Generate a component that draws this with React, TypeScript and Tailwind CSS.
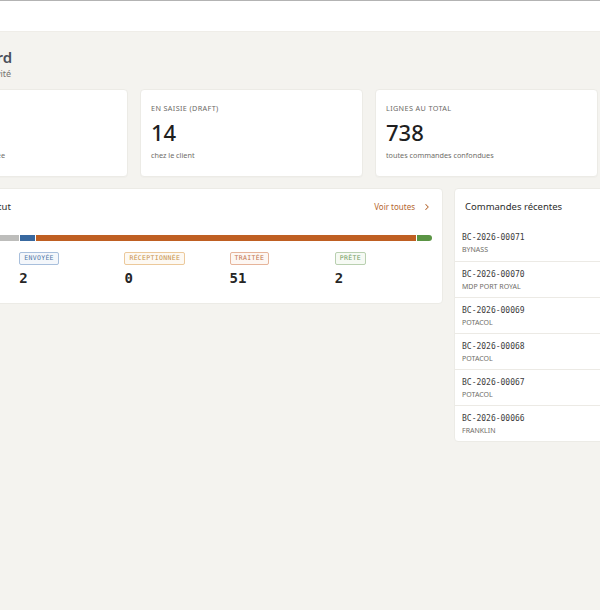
import React from 'react';
import { ChevronRight } from 'lucide-react';

const sans = { fontFamily: '"Noto Sans", Inter, sans-serif' };
const mono = { fontFamily: '"DejaVu Sans Mono", monospace' };

const stats = [
    { label: 'Commandes', value: '71', sub: 'depuis le début de l\u2019année' },
    { label: 'En saisie (draft)', value: '14', sub: 'chez le client' },
    { label: 'Lignes au total', value: '738', sub: 'toutes commandes confondues' },
    { label: 'Clients actifs', value: '9', sub: 'sur les 30 derniers jours' },
];

const statuses = [
    { key: 'draft', label: 'Brouillon', count: 14, bar: 'bg-[#bdbdbb]', badge: 'border-[#cfcfcc] text-[#807e78] bg-[#f7f7f5]' },
    { key: 'sent', label: 'Envoyée', count: 2, bar: 'bg-[#38689f]', badge: 'border-[#a8bfdc] text-[#5277a8] bg-[#f4f7fb]' },
    { key: 'received', label: 'Réceptionnée', count: 0, bar: 'bg-[#d9a256]', badge: 'border-[#ecc99b] text-[#c89148] bg-[#fdf9f3]' },
    { key: 'done', label: 'Traitée', count: 51, bar: 'bg-[#bf5f22]', badge: 'border-[#e6b49a] text-[#c27248] bg-[#fdf7f3]' },
    { key: 'ready', label: 'Prête', count: 2, bar: 'bg-[#5a9444]', badge: 'border-[#b9d0b0] text-[#739c62] bg-[#f6faf4]' },
];

const recent = [
    { code: 'BC-2026-00071', client: 'BYNASS' },
    { code: 'BC-2026-00070', client: 'MDP PORT ROYAL' },
    { code: 'BC-2026-00069', client: 'POTACOL' },
    { code: 'BC-2026-00068', client: 'POTACOL' },
    { code: 'BC-2026-00067', client: 'POTACOL' },
    { code: 'BC-2026-00066', client: 'FRANKLIN' },
];

const StatCard = ({ label, value, sub }) => (
    <div className="bg-white rounded-[4px] border border-[#ecebe6] shadow-[0_1px_1px_rgba(0,0,0,0.02)] h-[88px] pl-[10px] pt-[13px]">
        <p className="text-[7.25px] uppercase tracking-[0.05em] text-[#6b6a66] leading-[10px]">{label}</p>
        <p className="text-[22px] font-medium text-[#1f1f1f] leading-[26px] mt-[6px]">{value}</p>
        <p className="text-[7.25px] text-[#6f6d68] leading-[10px] mt-[5px]">{sub}</p>
    </div>
);

const App: React.FC = () => {
    const total = statuses.reduce((s, x) => s + x.count, 0);

    return (
        <div className="w-[600px] h-[610px] overflow-hidden bg-[#f4f3ef]" style={sans}>
            <header className="h-8 bg-white border-t border-t-[#b3b3b3] border-b border-b-[#efede8]" />

            <main className="ml-[-95px] w-[928px] pt-[15px]">
                <div className="ml-[-10px]">
                    <h1 className="text-[15px] font-semibold text-[#4a4f5a] leading-[20px]">Tableau de bord</h1>
                    <p className="text-[9px] text-[#77756f] leading-[12px] mt-[1px]">Vue d'ensemble de l'activité</p>
                </div>

                <div className="grid grid-cols-4 gap-3 mt-[9px]">
                    {stats.map(s => (
                        <StatCard key={s.label} {...s} />
                    ))}
                </div>

                <div className="flex gap-[11px] mt-[11px] items-start">
                    <section className="w-[538px] h-[116px] bg-white rounded-[4px] border border-[#ecebe6] pl-[8px] pr-[10px] pt-[11px]">
                        <div className="flex items-center justify-between">
                            <h2 className="text-[9.5px] text-[#2d2d2d] leading-[14px] ml-px">Répartition par statut</h2>
                            <a className="flex items-center text-[8px] text-[#b5672f] leading-[12px]">
                                Voir toutes
                                <ChevronRight className="w-[10px] h-[10px] ml-[7px]" strokeWidth={2.5} />
                            </a>
                        </div>

                        <div className="flex gap-px h-[6px] rounded-full overflow-hidden mt-[21px] ml-px">
                            {statuses.filter(s => s.count > 0).map(s => (
                                <div key={s.key} className={s.bar} style={{ width: `${(s.count / total) * 100}%` }} />
                            ))}
                        </div>

                        <div className="grid grid-cols-5 gap-2 mt-[11px]">
                            {statuses.map(s => (
                                <div key={s.key} className="flex flex-col items-start">
                                    <span
                                        className={`block border rounded-[2px] px-[4px] h-[13px] text-[6.5px] uppercase tracking-[0.05em] leading-[11px] ${s.badge}`}
                                        style={mono}
                                    >
                                        {s.label}
                                    </span>
                                    <p className="text-[14px] font-bold text-[#262626] leading-[18px] mt-[4px]" style={mono}>
                                        {s.count}
                                    </p>
                                </div>
                            ))}
                        </div>
                    </section>

                    <aside className="w-[379px] bg-white rounded-[4px] border border-[#ecebe6]">
                        <h2 className="h-[36px] flex items-center pl-[10px] text-[9.5px] text-[#2d2d2d]">Commandes récentes</h2>
                        {recent.map((r, i) => (
                            <div key={r.code} className={`h-[36px] pl-[7px] pt-[7px] ${i > 0 ? 'border-t border-[#eceae5]' : ''}`}>
                                <p className="text-[8px] text-[#3d3d3d] leading-[11px]" style={mono}>
                                    {r.code}
                                </p>
                                <p className="text-[7px] uppercase text-[#6f6d68] leading-[10px] mt-[2px]">{r.client}</p>
                            </div>
                        ))}
                    </aside>
                </div>
            </main>
        </div>
    );
};

export default App;
